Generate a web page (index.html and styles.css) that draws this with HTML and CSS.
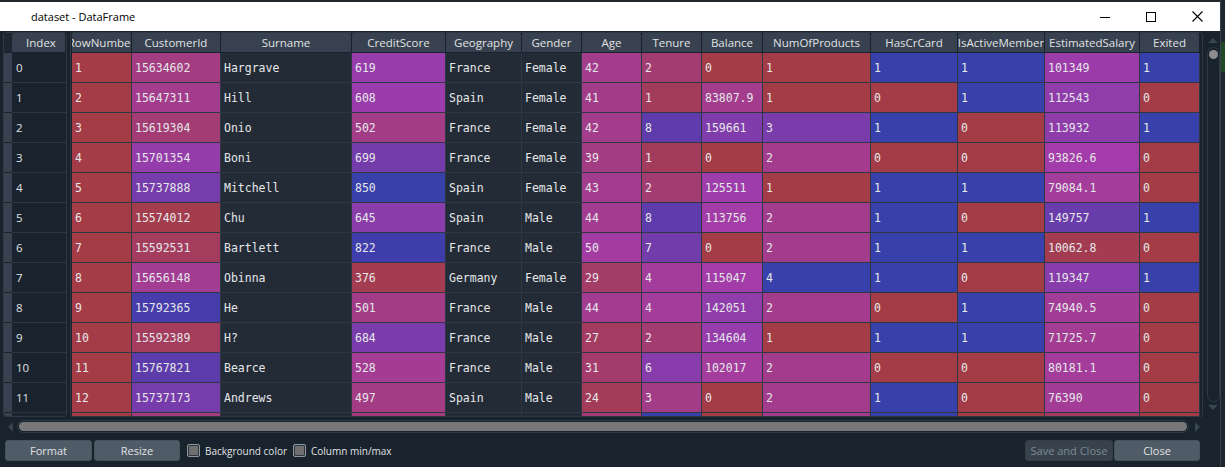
FILE: index.html
```html
<!DOCTYPE html>
<html>
<head>
<meta charset="utf-8">
<title>dataset - DataFrame</title>
<link rel="stylesheet" href="styles.css">
</head>
<body>
<div class="screen">
  <div class="win">
    <div class="titlebar">
      <span class="title">dataset - DataFrame</span>
      <div class="winbtns">
        <div class="wb"><svg width="10" height="10" viewBox="0 0 10 10"><rect x="0" y="5" width="10" height="1" fill="#000"/></svg></div>
        <div class="wb"><svg width="10" height="10" viewBox="0 0 10 10"><rect x="0.5" y="0.5" width="9" height="9" fill="none" stroke="#000" stroke-width="1"/></svg></div>
        <div class="wb"><svg width="11" height="11" viewBox="0 0 11 11"><path d="M0.5 0.5L10.5 10.5M10.5 0.5L0.5 10.5" stroke="#000" stroke-width="1.1"/></svg></div>
      </div>
    </div>
    <div class="client">
      <div class="tables">
        <div class="idxframe">
          <div class="irow ihead"><div class="vhc"></div><div class="hc ihc">Index</div></div>
          <div class="irow"><div class="vh"></div><div class="ic">0</div></div>
          <div class="irow"><div class="vh"></div><div class="ic">1</div></div>
          <div class="irow"><div class="vh"></div><div class="ic">2</div></div>
          <div class="irow"><div class="vh"></div><div class="ic">3</div></div>
          <div class="irow"><div class="vh"></div><div class="ic">4</div></div>
          <div class="irow"><div class="vh"></div><div class="ic">5</div></div>
          <div class="irow"><div class="vh"></div><div class="ic">6</div></div>
          <div class="irow"><div class="vh"></div><div class="ic">7</div></div>
          <div class="irow"><div class="vh"></div><div class="ic">8</div></div>
          <div class="irow"><div class="vh"></div><div class="ic">9</div></div>
          <div class="irow"><div class="vh"></div><div class="ic">10</div></div>
          <div class="irow"><div class="vh"></div><div class="ic">11</div></div>
          <div class="irow"><div class="vh"></div><div class="ic"></div></div>
        </div>
        <div class="dframe">
          <div class="hrow" id="hdr">
            <div class="hc" data-k="RowNumber"><span>RowNumber</span></div>
            <div class="hc" data-k="CustomerId"><span>CustomerId</span></div>
            <div class="hc"><span>Surname</span></div>
            <div class="hc" data-k="CreditScore"><span>CreditScore</span></div>
            <div class="hc"><span>Geography</span></div>
            <div class="hc"><span>Gender</span></div>
            <div class="hc" data-k="Age"><span>Age</span></div>
            <div class="hc" data-k="Tenure"><span>Tenure</span></div>
            <div class="hc" data-k="Balance"><span>Balance</span></div>
            <div class="hc" data-k="NumOfProducts"><span>NumOfProducts</span></div>
            <div class="hc" data-k="HasCrCard"><span>HasCrCard</span></div>
            <div class="hc" data-k="IsActiveMember"><span>IsActiveMember</span></div>
            <div class="hc" data-k="EstimatedSalary"><span>EstimatedSalary</span></div>
            <div class="hc" data-k="Exited"><span>Exited</span></div>
          </div>
          <div class="drow"><div class="c">1</div><div class="c">15634602</div><div class="c">Hargrave</div><div class="c">619</div><div class="c">France</div><div class="c">Female</div><div class="c">42</div><div class="c">2</div><div class="c">0</div><div class="c">1</div><div class="c">1</div><div class="c">1</div><div class="c">101349</div><div class="c">1</div></div>
          <div class="drow"><div class="c">2</div><div class="c">15647311</div><div class="c">Hill</div><div class="c">608</div><div class="c">Spain</div><div class="c">Female</div><div class="c">41</div><div class="c">1</div><div class="c">83807.9</div><div class="c">1</div><div class="c">0</div><div class="c">1</div><div class="c">112543</div><div class="c">0</div></div>
          <div class="drow"><div class="c">3</div><div class="c">15619304</div><div class="c">Onio</div><div class="c">502</div><div class="c">France</div><div class="c">Female</div><div class="c">42</div><div class="c">8</div><div class="c">159661</div><div class="c">3</div><div class="c">1</div><div class="c">0</div><div class="c">113932</div><div class="c">1</div></div>
          <div class="drow"><div class="c">4</div><div class="c">15701354</div><div class="c">Boni</div><div class="c">699</div><div class="c">France</div><div class="c">Female</div><div class="c">39</div><div class="c">1</div><div class="c">0</div><div class="c">2</div><div class="c">0</div><div class="c">0</div><div class="c">93826.6</div><div class="c">0</div></div>
          <div class="drow"><div class="c">5</div><div class="c">15737888</div><div class="c">Mitchell</div><div class="c">850</div><div class="c">Spain</div><div class="c">Female</div><div class="c">43</div><div class="c">2</div><div class="c">125511</div><div class="c">1</div><div class="c">1</div><div class="c">1</div><div class="c">79084.1</div><div class="c">0</div></div>
          <div class="drow"><div class="c">6</div><div class="c">15574012</div><div class="c">Chu</div><div class="c">645</div><div class="c">Spain</div><div class="c">Male</div><div class="c">44</div><div class="c">8</div><div class="c">113756</div><div class="c">2</div><div class="c">1</div><div class="c">0</div><div class="c">149757</div><div class="c">1</div></div>
          <div class="drow"><div class="c">7</div><div class="c">15592531</div><div class="c">Bartlett</div><div class="c">822</div><div class="c">France</div><div class="c">Male</div><div class="c">50</div><div class="c">7</div><div class="c">0</div><div class="c">2</div><div class="c">1</div><div class="c">1</div><div class="c">10062.8</div><div class="c">0</div></div>
          <div class="drow"><div class="c">8</div><div class="c">15656148</div><div class="c">Obinna</div><div class="c">376</div><div class="c">Germany</div><div class="c">Female</div><div class="c">29</div><div class="c">4</div><div class="c">115047</div><div class="c">4</div><div class="c">1</div><div class="c">0</div><div class="c">119347</div><div class="c">1</div></div>
          <div class="drow"><div class="c">9</div><div class="c">15792365</div><div class="c">He</div><div class="c">501</div><div class="c">France</div><div class="c">Male</div><div class="c">44</div><div class="c">4</div><div class="c">142051</div><div class="c">2</div><div class="c">0</div><div class="c">1</div><div class="c">74940.5</div><div class="c">0</div></div>
          <div class="drow"><div class="c">10</div><div class="c">15592389</div><div class="c">H?</div><div class="c">684</div><div class="c">France</div><div class="c">Male</div><div class="c">27</div><div class="c">2</div><div class="c">134604</div><div class="c">1</div><div class="c">1</div><div class="c">1</div><div class="c">71725.7</div><div class="c">0</div></div>
          <div class="drow"><div class="c">11</div><div class="c">15767821</div><div class="c">Bearce</div><div class="c">528</div><div class="c">France</div><div class="c">Male</div><div class="c">31</div><div class="c">6</div><div class="c">102017</div><div class="c">2</div><div class="c">0</div><div class="c">0</div><div class="c">80181.1</div><div class="c">0</div></div>
          <div class="drow"><div class="c">12</div><div class="c">15737173</div><div class="c">Andrews</div><div class="c">497</div><div class="c">Spain</div><div class="c">Male</div><div class="c">24</div><div class="c">3</div><div class="c">0</div><div class="c">2</div><div class="c">1</div><div class="c">0</div><div class="c">76390</div><div class="c">0</div></div>
          <div class="drow"><div class="c" data-v="13"></div><div class="c" data-v="15632264"></div><div class="c"></div><div class="c" data-v="476"></div><div class="c"></div><div class="c"></div><div class="c" data-v="34"></div><div class="c" data-v="10"></div><div class="c" data-v="0"></div><div class="c" data-v="2"></div><div class="c" data-v="1"></div><div class="c" data-v="0"></div><div class="c" data-v="26261"></div><div class="c" data-v="0"></div></div>
        </div>
        <div class="vscroll">
          <svg class="arr" width="10" height="5" viewBox="0 0 10 5"><path d="M0 5L5 0L10 5Z" fill="#3a4552"/></svg>
          <div class="vtrack"><div class="vhandle"></div></div>
          <svg class="arr arrdown" width="10" height="5" viewBox="0 0 10 5"><path d="M0 0L5 5L10 0Z" fill="#3a4552"/></svg>
        </div>
      </div>
      <div class="hscroll">
        <svg class="harr" width="5" height="10" viewBox="0 0 5 10"><path d="M5 0L0 5L5 10Z" fill="#37414f"/></svg>
        <div class="htrack"><div class="hhandle"></div></div>
        <svg class="harr harr-r" width="5" height="10" viewBox="0 0 5 10"><path d="M0 0L5 5L0 10Z" fill="#3a4552"/></svg>
      </div>
      <div class="footer">
        <div class="btn b-format">Format</div>
        <div class="btn b-resize">Resize</div>
        <div class="chk chk1"></div><span class="lbl">Background color</span>
        <div class="chk chk2"></div><span class="lbl">Column min/max</span>
        <div class="spacer"></div>
        <div class="btn b-save">Save and Close</div>
        <div class="btn b-close">Close</div>
      </div>
    </div>
  </div>
  <div class="desk"><div class="deskgreen"></div></div>
</div>
<script src="script.js"></script>
</body>
</html>
```
FILE: styles.css
```css
* { box-sizing: border-box; }
html, body { margin: 0; padding: 0; }
body {
  width: 1225px;
  height: 467px;
  overflow: hidden;
  background: #22272b;
  font-family: "Open Sans", "Noto Sans", sans-serif;
}
.screen { display: flex; width: 1225px; height: 467px; }
.win {
  width: 1220px;
  margin-top: 2px;
  display: flex;
  flex-direction: column;
  height: 465px;
}
.titlebar {
  height: 29px;
  background: #ffffff;
  display: flex;
  align-items: center;
  padding-left: 31px;
}
.title { font-size: 11px; color: #000; flex: 1; }
.winbtns { display: flex; height: 29px; }
.wb { width: 46px; height: 29px; display: flex; align-items: center; justify-content: center; }

.client {
  flex: 1;
  background: #19232d;
  display: flex;
  flex-direction: column;
  padding: 1px 0 0 3px;
}
.tables { display: flex; height: 385px; }

.idxframe {
  width: 64px;
  height: 385px;
  border: 1px solid #2e3944;
  border-radius: 3px;
  overflow: hidden;
  background: #19232d;
}
.irow { display: flex; height: 30px; }
.irow.ihead { height: 20px; }
.vhc { width: 8px; background: #1d2731; border-bottom: 1px solid #19232d; }
.vh { width: 8px; background: #37414f; border-bottom: 1px solid #1b242d; }
.ic {
  flex: 1;
  background: #19232d;
  border-bottom: 1px solid #2c3742;
  font-size: 11.5px;
  color: #e0e1e3;
  padding-left: 4px;
  display: flex;
  align-items: center;
}
.hc {
  background: #37414f;
  border-right: 1px solid #19232d;
  border-bottom: 1px solid #19232d;
  display: flex;
  align-items: center;
  justify-content: center;
  overflow: hidden;
  white-space: nowrap;
  font-size: 11.5px;
  color: #e0e1e3;
  border-radius: 2px 2px 0 0;
}
.hc span { flex: none; }
.ihc { flex: 1; padding-left: 5px; }

.dframe {
  margin-left: 3px;
  width: 1133px;
  height: 385px;
  border: 1px solid #2e3944;
  border-radius: 3px;
  padding: 0 2px 0 1px;
  overflow: hidden;
  background: #19232d;
}
.hrow, .drow {
  display: grid;
  grid-template-columns: 60px 89px 131px 94px 76px 60px 60px 60px 61px 108px 87px 87px 95px 60px;
}
.hrow { height: 20px; }
.drow { height: 30px; }
.c {
  background: #222b36;
  border-right: 1px solid #2f3842;
  border-bottom: 1px solid #2f3842;
  font-family: "DejaVu Sans Mono", "Liberation Mono", monospace;
  font-size: 11.5px;
  color: #e6e7e9;
  padding-left: 3px;
  display: flex;
  align-items: center;
  overflow: hidden;
  white-space: nowrap;
}

.vscroll {
  margin-left: 3px;
  width: 14px;
  height: 385px;
  display: flex;
  flex-direction: column;
  align-items: center;
  padding: 6px 0 7px;
}
.arr { flex: none; }
.vtrack {
  margin-top: 4px;
  width: 13px;
  flex: 1;
  border: 1px solid #2f3a45;
  border-radius: 7px;
  display: flex;
  justify-content: center;
  padding-top: 2px;
}
.vhandle { width: 9px; height: 9px; border-radius: 50%; background: #8c8c8c; }
.arrdown { margin-top: 3px; }

.hscroll {
  margin-top: 3px;
  height: 13px;
  display: flex;
  align-items: center;
}
.harr { flex: none; margin-left: 5px; }
.htrack {
  margin-left: 4px;
  width: 1172px;
  height: 13px;
  border: 1px solid #2f3a45;
  border-radius: 7px;
  padding: 1px;
}
.hhandle { height: 9px; background: #787878; border-radius: 5px; }
.harr-r { margin-left: 6px; }

.footer {
  margin-top: 7px;
  height: 21px;
  display: flex;
  align-items: center;
  font-size: 11px;
  color: #e0e1e3;
}
.btn {
  height: 21px;
  border-radius: 3px;
  background: #4f5b66;
  border: 1px solid #46525d;
  display: flex;
  align-items: center;
  justify-content: center;
  white-space: nowrap;
}
.b-format { margin-left: 2px; width: 87px; }
.b-resize { margin-left: 2px; width: 86px; }
.chk {
  width: 13px;
  height: 13px;
  border: 1px solid #8f979e;
  border-radius: 2px;
  background: #6f6f6f;
  box-shadow: inset 0 0 0 1px #2a3540;
}
.chk1 { margin-left: 7px; }
.chk2 { margin-left: 6px; }
.lbl { margin-left: 5px; font-size: 10px; }
.spacer { flex: 1; }
.b-save { width: 88px; background: #37424d; border-color: #333e49; color: #7e8993; }
.b-close { margin-left: 1px; width: 86px; margin-right: 20px; }

.desk {
  width: 5px;
  height: 467px;
  background: #1f272e;
  border-left: 1px solid #36414b;
  padding-top: 42px;
}
.deskgreen { height: 30px; background: #1f4a25; }
```
FILE: script.js
```js
(function () {
  var R = {
    RowNumber: [1, 10000],
    CustomerId: [15565701, 15815690],
    CreditScore: [350, 850],
    Age: [18, 92],
    Tenure: [0, 10],
    Balance: [0, 250898.09],
    NumOfProducts: [1, 4],
    HasCrCard: [0, 1],
    IsActiveMember: [0, 1],
    EstimatedSalary: [11.58, 199992.48],
    Exited: [0, 1]
  };
  var BG = [25, 35, 45];
  function hsv(h, s, v) {
    var i = Math.floor(h * 6), f = h * 6 - i;
    var p = v * (1 - s), q = v * (1 - f * s), t = v * (1 - (1 - f) * s);
    switch (((i % 6) + 6) % 6) {
      case 0: return [v, t, p];
      case 1: return [q, v, p];
      case 2: return [p, v, t];
      case 3: return [p, q, v];
      case 4: return [t, p, v];
      default: return [v, p, q];
    }
  }
  var keys = [];
  document.querySelectorAll('#hdr .hc').forEach(function (h) { keys.push(h.getAttribute('data-k')); });
  document.querySelectorAll('.drow').forEach(function (row) {
    Array.prototype.forEach.call(row.children, function (cell, i) {
      var k = keys[i];
      if (!k) return;
      var raw = cell.hasAttribute('data-v') ? cell.getAttribute('data-v') : cell.textContent;
      var v = parseFloat(raw);
      if (isNaN(v)) return;
      var mn = R[k][0], mx = R[k][1];
      var h = Math.abs(0.66 + 0.33 * (mx - v) / (mx - mn));
      var c = hsv(h, 0.7, 1.0);
      var rgb = c.map(function (x, j) { return Math.round(x * 255 * 0.6 + BG[j] * 0.4); });
      cell.style.background = 'rgb(' + rgb.join(',') + ')';
    });
  });
})();
```
